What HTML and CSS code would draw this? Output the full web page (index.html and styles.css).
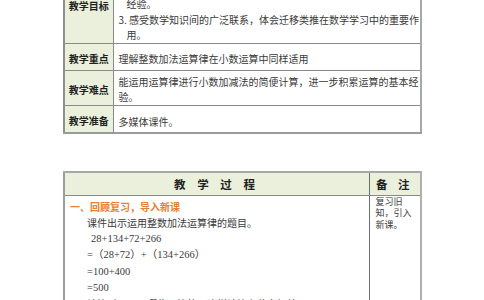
FILE: index.html
```html
<!DOCTYPE html>
<html lang="zh-CN">
<head>
<meta charset="utf-8">
<title>教学设计</title>
<link rel="stylesheet" href="styles.css">
</head>
<body>
<div class="page">
  <table class="info">
    <colgroup><col class="c-label"><col class="c-body"></colgroup>
    <tr class="r-goal">
      <th>教学目标</th>
      <td>
        <div class="ln">1. 理解整数加法运算律对小数加法同样适用。</div>
        <div class="ln">2. 经历探索小数加减法简便计算的过程，积累数学活动</div>
        <div class="ln hang">经验。</div>
        <div class="ln">3. 感受数学知识间的广泛联系，体会迁移类推在数学学习中的重要作</div>
        <div class="ln hang">用。</div>
      </td>
    </tr>
    <tr class="r-key">
      <th>教学重点</th>
      <td><div class="ln">理解整数加法运算律在小数运算中同样适用</div></td>
    </tr>
    <tr class="r-hard">
      <th>教学难点</th>
      <td>
        <div class="ln">能运用运算律进行小数加减法的简便计算，进一步积累运算的基本经</div>
        <div class="ln">验。</div>
      </td>
    </tr>
    <tr class="r-prep">
      <th>教学准备</th>
      <td><div class="ln">多媒体课件。</div></td>
    </tr>
  </table>

  <table class="process">
    <colgroup><col class="c-main"><col class="c-note"></colgroup>
    <tr class="head">
      <th class="h-main">教 学 过 程</th>
      <th class="h-note">备 注</th>
    </tr>
    <tr>
      <td class="main">
        <div class="sec">一、回顾复习，导入新课</div>
        <div class="p ind">课件出示运用整数加法运算律的题目。</div>
        <div class="p ind2 num">28+134+72+266</div>
        <div class="p ind num">=（28+72）+（134+266）</div>
        <div class="p ind num">=100+400</div>
        <div class="p ind num">=500</div>
        <div class="p ind">计算时运用了哪些运算律？这样计算有什么好处？</div>
      </td>
      <td class="note">复习旧<br>知，引入<br>新课。</td>
    </tr>
  </table>
</div>
</body>
</html>
```
FILE: styles.css
```css
html, body {
  margin: 0;
  padding: 0;
  background: #ffffff;
  overflow: hidden;
}

body {
  font-family: "Noto Sans CJK SC", sans-serif;
  font-size: 10px;
  color: #3a3a3a;
}

.page {
  width: 359px;
  margin: -35px 0 0 63px;
}

table {
  border-collapse: collapse;
  table-layout: fixed;
  width: 359px;
}

/* ---------- info table ---------- */
.info {
  border-left: 2px solid #8f8f8f;
  border-right: 2px solid #a8a8a8;
  border-bottom: 2px solid #9a9a9a;
}

.info .c-label { width: 49px; }

.info th {
  background: #eaf0dc;
  color: #1f1f1f;
  font-weight: 700;
  font-size: 10px;
  line-height: 14px;
  text-align: center;
  vertical-align: middle;
  border-right: 1px solid #8a8a8a;
  border-bottom: 1px solid #8a8a8a;
  padding: 4px 0 0;
  white-space: nowrap;
}

.info td {
  vertical-align: top;
  border-bottom: 1px solid #8a8a8a;
  padding: 0 0 0 5px;
  white-space: nowrap;
  box-sizing: border-box;
}

.info .ln {
  line-height: 15.5px;
}

.info .hang { padding-left: 8px; }

.r-goal td { padding-top: 0; padding-bottom: 0; }
.r-key td { height: 27px; padding-top: 7.5px; padding-bottom: 3px; }
.r-key .ln { line-height: 16px; }
.r-hard td { padding-top: 2.75px; padding-bottom: 0; }
.r-prep td { height: 26px; padding-top: 8.5px; padding-bottom: 2px; }

/* ---------- process table ---------- */
.process {
  margin-top: 37px;
  border-left: 2px solid #9c9c9c;
  border-right: 2px solid #b0b0b0;
  border-top: 2px solid #a8a8a8;
}

.process .c-note { width: 52px; }

.process .head th {
  background: #eaf0dc;
  height: 22px;
  padding: 0;
  font-weight: 700;
  font-size: 11.5px;
  color: #222222;
  border-bottom: 1px solid #8a8a8a;
  vertical-align: middle;
  white-space: nowrap;
}

.process .h-main {
  letter-spacing: 4.5px;
  padding-left: 4.5px;
  text-align: center;
}

.process .h-note {
  letter-spacing: 4px;
  padding-left: 4px;
  text-align: center;
  border-left: 1.5px solid #6e6e6e;
}

.process td {
  vertical-align: top;
}

.process .main {
  padding: 3px 0 0 5px;
  white-space: nowrap;
  height: 140px;
}

.process .note {
  border-left: 1.5px solid #6e6e6e;
  padding: 0 0 0 6px;
  font-size: 9px;
  line-height: 11.5px;
  color: #3a3a3a;
}

.sec {
  font-weight: 700;
  color: #e8802e;
  line-height: 16.2px;
}

.p {
  line-height: 16.2px;
}

.num {
  font-family: "Liberation Serif", "Noto Sans CJK SC", serif;
  font-size: 10.5px;
}

.ind { padding-left: 17px; }
.ind2 { padding-left: 21px; }
```
